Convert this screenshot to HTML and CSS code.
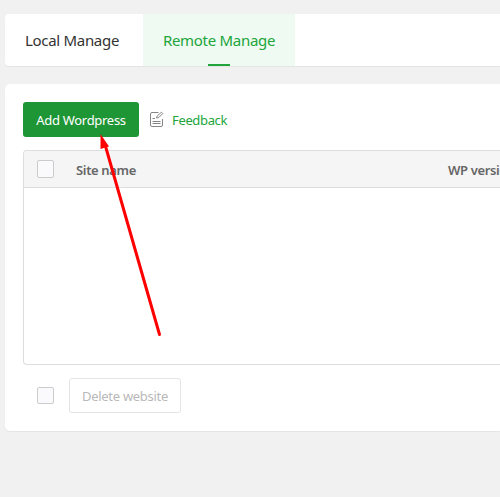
FILE: index.html
```html
<!DOCTYPE html>
<html lang="en">
<head>
<meta charset="utf-8">
<title>Remote Manage</title>
<link rel="stylesheet" href="styles.css">
</head>
<body>
<nav class="tabs">
  <a class="tab"><span class="tab-local">Local Manage</span></a>
  <a class="tab active"><span class="tab-remote">Remote Manage</span></a>
</nav>
<main class="panel">
  <div class="toolbar">
    <button class="btn primary">Add Wordpress</button>
    <a class="feedback">
      <svg width="14" height="16" viewBox="0 0 14 16" fill="none" stroke="#858585"><path d="M8.500 1.500H2Q.5 1.500 .5 3V14Q.5 15.500 2 15.500H11Q12.500 15.500 12.500 14V8"/><path d="M2.500 7.500H5M2.500 10.500H10.500M2.500 12.500H10.500M6.500 7L7.200 5 11.500 1.200 12.800 2.500 8.800 6.500Z"/></svg>
      <span>Feedback</span>
    </a>
  </div>
  <section class="table">
    <header class="row">
      <span class="check"></span>
      <span class="site">Site name</span>
      <span class="version">WP version</span>
    </header>
  </section>
  <footer class="actions">
    <span class="check"></span>
    <button class="btn disabled">Delete website</button>
  </footer>
</main>
<svg class="arrow" width="70" height="206" viewBox="0 0 70 206"><path d="M64.500 203.500L11 17" stroke="#f00" stroke-width="3" stroke-linecap="round"/><path d="M5.500 3L14 15.500 5.500 18Z" fill="#f00"/></svg>
</body>
</html>
```

FILE: styles.css
```css
* { box-sizing: border-box; }
body {
  margin: 0;
  height: 497px;
  padding: 14px 0 0 5px;
  overflow: hidden;
  background: #f1f1f1;
  font: 13px "Noto Sans", sans-serif;
  color: #666;
}
span { white-space: nowrap; }
.tabs {
  display: flex;
  height: 52px;
  background: #fff;
  border-radius: 4px 0 0 4px;
  box-shadow: 0 1px 1px #e4e4e4;
}
.tab {
  display: flex;
  flex-direction: column;
  align-items: center;
  width: 138px;
  padding-top: 15px;
  font-size: 15px;
  line-height: 22px;
  color: #333;
}
.tab-local { letter-spacing: -.3px; margin-left: -4px; }
.tab-remote { letter-spacing: -.3px; }
.tab.active { width: 152px; background: #effaf2; color: #20a53a; }
.tab.active::after {
  content: "";
  width: 22px;
  height: 2px;
  margin-top: auto;
  background: #20a53a;
}
.panel {
  height: 347px;
  margin-top: 18px;
  padding: 18px 0 0 18px;
  background: #fff;
  border-radius: 5px 0 0 5px;
  box-shadow: 0 1px 1px #e4e4e4;
}
.toolbar { display: flex; align-items: center; height: 35px; }
.btn {
  height: 35px;
  padding: 0;
  border: 0;
  border-radius: 3px;
  font: 13px "Noto Sans", sans-serif;
  letter-spacing: -.3px;
  white-space: nowrap;
}
.primary { width: 116px; background: #1f9636; color: #fff; }
.feedback { display: flex; align-items: center; margin-left: 11px; color: #20a53a; }
.feedback svg { position: relative; top: -1px; }
.feedback span { margin-left: 8px; letter-spacing: -.35px; }
.table {
  height: 215px;
  margin-top: 13px;
  border: 1px solid #ddd;
  border-right: 0;
  border-radius: 4px 0 0 4px;
}
.row {
  display: flex;
  align-items: center;
  height: 37px;
  padding-left: 13px;
  background: #f5f5f5;
  border-bottom: 1px solid #ddd;
  border-radius: 3px 0 0;
  overflow: hidden;
  font-weight: 600;
  letter-spacing: -.35px;
}
.check {
  flex: none;
  width: 17px;
  height: 18px;
  border: 1px solid #ccc;
  border-radius: 2px;
  background: #fafafc;
}
.site { flex: none; width: 372px; margin: 2px 0 0 22px; }
.version { flex: none; margin-top: 2px; }
.actions { display: flex; align-items: center; padding: 13px 0 0 14px; }
.actions .check { height: 17px; }
.disabled { width: 112px; margin-left: 15px; border: 1px solid #e4e4e4; background: #fff; color: #b8b8b8; }
.arrow { position: absolute; left: 95px; top: 131px; }
```
